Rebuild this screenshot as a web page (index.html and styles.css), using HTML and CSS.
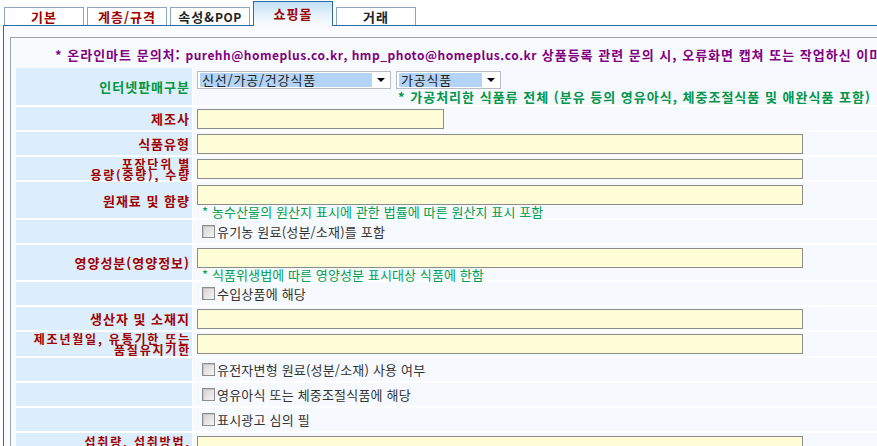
FILE: index.html
```html
<!DOCTYPE html>
<html lang="ko">
<head>
<meta charset="utf-8">
<title>쇼핑몰</title>
<link rel="stylesheet" href="styles.css">
</head>
<body>
<div class="tabs">
  <div class="tab red">기본</div>
  <div class="tab red">계층/규격</div>
  <div class="tab">속성&amp;<span class="en">POP</span></div>
  <div class="tab active">쇼핑몰</div>
  <div class="tab">거래</div>
</div>
<div class="panel">
  <div class="box">
    <p class="notice">* 온라인마트 문의처: <span class="en">purehh@homeplus.co.kr, hmp_photo@homeplus.co.kr</span> 상품등록 관련 문의 시, 오류화면 캡쳐 또는 작업하신 이미지를 첨부하여 주시기 바랍니다.</p>
    <div class="form">
      <div class="lbl green">인터넷판매구분</div>
      <div class="val top">
        <div class="select s1"><span class="opt">신선/가공/건강식품</span><span class="arrow"></span></div>
        <div class="sub">
          <div class="select s2"><span class="opt">가공식품</span><span class="arrow"></span></div>
          <div class="note bold">* 가공처리한 식품류 전체 (분유 등의 영유아식, 체중조절식품 및 애완식품 포함)</div>
        </div>
      </div>

      <div class="lbl">제조사</div>
      <div class="val"><input class="inp short" type="text"></div>

      <div class="lbl">식품유형</div>
      <div class="val"><input class="inp" type="text"></div>

      <div class="lbl two">포장단위 별<br>용량(중량), 수량</div>
      <div class="val"><input class="inp" type="text"></div>

      <div class="lbl">원재료 및 함량</div>
      <div class="val col"><input class="inp" type="text"><div class="note">* 농수산물의 원산지 표시에 관한 법률에 따른 원산지 표시 포함</div></div>

      <div class="lbl"></div>
      <div class="val"><label class="chk"><input class="cb" type="checkbox">유기농 원료(성분/소재)를 포함</label></div>

      <div class="lbl">영양성분(영양정보)</div>
      <div class="val col"><input class="inp" type="text"><div class="note">* 식품위생법에 따른 영양성분 표시대상 식품에 한함</div></div>

      <div class="lbl"></div>
      <div class="val"><label class="chk"><input class="cb" type="checkbox">수입상품에 해당</label></div>

      <div class="lbl">생산자 및 소재지</div>
      <div class="val"><input class="inp" type="text"></div>

      <div class="lbl two">제조년월일, 유통기한 또는<br>품질유지기한</div>
      <div class="val"><input class="inp" type="text"></div>

      <div class="lbl"></div>
      <div class="val"><label class="chk"><input class="cb" type="checkbox">유전자변형 원료(성분/소재) 사용 여부</label></div>

      <div class="lbl"></div>
      <div class="val"><label class="chk"><input class="cb" type="checkbox">영유아식 또는 체중조절식품에 해당</label></div>

      <div class="lbl"></div>
      <div class="val"><label class="chk"><input class="cb" type="checkbox">표시광고 심의 필</label></div>

      <div class="lbl two last">섭취량, 섭취방법,<br>섭취 시 주의사항</div>
      <div class="val last"><input class="inp" type="text"></div>
    </div>
  </div>
</div>
</body>
</html>
```
FILE: styles.css
```css
html, body {
  margin: 0;
  padding: 0;
  width: 877px;
  height: 446px;
  overflow: hidden;
  background: #ffffff;
}
body {
  font-family: "Noto Sans CJK KR", "Noto Sans", sans-serif;
  font-size: 13px;
  color: #222;
}
.en {
  font-size: 12px;
  letter-spacing: 0.5px;
}

/* tabs */
.tabs {
  display: flex;
  align-items: flex-end;
  gap: 3px;
  height: 25px;
  padding-left: 4px;
  position: relative;
  z-index: 1;
}
.tab {
  box-sizing: border-box;
  width: 80px;
  height: 18px;
  border: 1px solid #8aa6c0;
  border-bottom: none;
  background: #ffffff;
  display: flex;
  align-items: center;
  justify-content: center;
  font-weight: bold;
  line-height: 13px;
  color: #222;
  letter-spacing: 1px;
}
.tab.red { color: #a00000; }
.tab.active {
  height: 25px;
  margin-bottom: -1px;
  border-color: #2c6aad;
  background: linear-gradient(#c4e1f7, #eef6fd 70%, #f9fbfe);
  align-items: flex-start;
  padding-top: 5px;
  color: #a00000;
}

/* panel */
.panel {
  box-sizing: border-box;
  margin-left: 3px;
  width: 1100px;
  height: 480px;
  border-top: 1px solid #2c6aad;
  border-left: 1px solid #2c6aad;
  background: #f9fbfe;
  padding: 11px 0 0 6px;
}
.box {
  height: 460px;
  border-top: 1px solid #a3a3a3;
  border-left: 1px solid #a3a3a3;
  background: #f8fbfe;
  padding-left: 5px;
}
.notice {
  margin: 0 0 6px 0;
  padding: 10px 0 0 39px;
  line-height: 14px;
  height: 14px;
  color: #820082;
  font-weight: bold;
  white-space: nowrap;
  letter-spacing: 1px;
}

/* form grid */
.form {
  display: grid;
  grid-template-columns: 176px 1100px;
  grid-template-rows: 37px 23px 23px 23px 36px 23px 35px 23px 23px 24px 23px 23px 23px 25px;
  gap: 2px 1px;
  background: #ffffff;
}
.lbl {
  background: #dcedfc;
  display: flex;
  align-items: center;
  justify-content: flex-end;
  text-align: right;
  padding-right: 2px;
  font-weight: bold;
  color: #a00000;
  line-height: 13px;
  letter-spacing: 1px;
  white-space: nowrap;
}
.lbl.green { color: #00963c; }
.lbl.two {
  font-size: 12px;
  line-height: 11px;
  letter-spacing: 1.8px;
  padding-right: 1px;
}
.lbl.last { align-items: flex-start; padding-top: 3px; }
.val {
  background: #f6f9fd;
  display: flex;
  align-items: center;
  padding-left: 4px;
}
.val.col, .val.top {
  align-items: flex-start;
  padding-top: 3px;
}
.val.col { flex-direction: column; }
.val.top { gap: 5px; }
.val.last { align-items: flex-start; padding-top: 3px; }

.inp {
  box-sizing: border-box;
  width: 606px;
  height: 20px;
  margin: 0;
  border: 1px solid #8c8c8c;
  background: #fffdd6;
  padding: 0 2px;
  font: inherit;
  outline: none;
}
.inp.short { width: 247px; }

.note {
  color: #00a050;
  line-height: 13px;
  padding-left: 5px;
  white-space: nowrap;
  letter-spacing: 0.1px;
}
.note.bold {
  font-weight: bold;
  color: #00964b;
  line-height: 14px;
  padding-left: 2px;
  letter-spacing: 1px;
}

/* select boxes */
.select {
  box-sizing: border-box;
  height: 18px;
  border: 1px solid #b6bcc2;
  background: #ffffff;
  display: flex;
  align-items: center;
  padding-left: 2px;
}
.select .opt {
  height: 14px;
  line-height: 14px;
  background: #b3d4f6;
  color: #222;
  padding-left: 2px;
  white-space: nowrap;
  letter-spacing: 0.8px;
}
.select .arrow {
  width: 0;
  height: 0;
  margin: 0 auto;
  border-left: 4px solid transparent;
  border-right: 4px solid transparent;
  border-top: 4px solid #000;
}
.s1 { width: 194px; }
.s1 .opt { width: 170px; }
.s2 { width: 105px; }
.s2 .opt { width: 81px; }
.sub {
  display: flex;
  flex-direction: column;
  gap: 1px;
}

/* checkboxes */
.chk {
  display: flex;
  align-items: center;
  gap: 2px;
  color: #333;
  line-height: 14px;
  white-space: nowrap;
  letter-spacing: 0.2px;
}
.cb {
  appearance: none;
  -webkit-appearance: none;
  box-sizing: border-box;
  width: 13px;
  height: 13px;
  margin: 0 0 0 5px;
  border: 1px solid #8d8d8d;
  background: linear-gradient(135deg, #d2d2d2, #f6f6f6);
  box-shadow: inset 1px 1px 0 #c4c4c4;
}
```
